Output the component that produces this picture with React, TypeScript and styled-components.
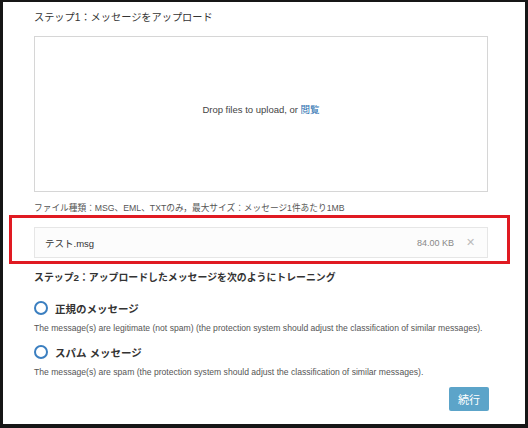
import styled, { createGlobalStyle } from 'styled-components'

const GlobalStyle = createGlobalStyle`
  html, body {
    margin: 0;
    padding: 0;
    background: #fff;
  }
  body {
    font-family: 'Liberation Sans', 'Noto Sans CJK JP', sans-serif;
    color: #333;
  }
`

const Frame = styled.div`
  box-sizing: border-box;
  width: 528px;
  height: 428px;
  border: 3px solid #161616;
  border-top-width: 2px;
  border-bottom-width: 4px;
  padding: 9px 37px 0 31px;
  display: flex;
  flex-direction: column;
`

const StepTitle = styled.h3<{ bold?: boolean }>`
  margin: 0;
  font-size: ${(props) => (props.bold ? 9.9 : 10.2)}px;
  line-height: 14px;
  font-weight: ${(props) => (props.bold ? 700 : 400)};
  color: #333;
`

const DropZone = styled.div`
  box-sizing: border-box;
  height: 156px;
  margin-top: 11px;
  border: 1px solid #d6d6d6;
  display: flex;
  align-items: center;
  justify-content: center;
  padding-bottom: 10px;
  font-size: 9.5px;
  color: #444;
  a {
    color: #2a6fb0;
    text-decoration: none;
  }
`

const Hint = styled.p`
  margin: 9px 0 0;
  font-size: 8.7px;
  line-height: 14px;
  color: #555;
`

const Highlight = styled.div`
  margin: 0 -22px 0 -25px;
  border: 3px solid #e01a22;
  padding: 9px 19px 3px 22px;
`

const FileRow = styled.div`
  box-sizing: border-box;
  height: 31px;
  border: 1px solid #e6e6e6;
  background: #fcfcfc;
  display: flex;
  align-items: center;
  padding: 0 12px 0 10px;
`

const FileName = styled.span`
  font-size: 9.5px;
  color: #333;
`

const FileSize = styled.span`
  margin-left: auto;
  font-size: 9px;
  color: #888;
`

const Remove = styled.span`
  margin-left: 12px;
  font-size: 11px;
  color: #bbb;
`

const Step2 = styled(StepTitle)`
  margin-top: 7px;
`

const Option = styled.div<{ first?: boolean }>`
  margin-top: ${(props) => (props.first ? 15 : 10)}px;
  display: flex;
  flex-direction: column;
`

const RadioRow = styled.label`
  display: flex;
  align-items: center;
  height: 16px;
`

const RadioCircle = styled.span`
  box-sizing: border-box;
  width: 14px;
  height: 14px;
  border: 2px solid #3b7fc0;
  border-radius: 50%;
  margin-right: 7px;
`

const RadioText = styled.span`
  font-size: 10.5px;
  font-weight: 600;
  color: #333;
`

const Description = styled.p`
  margin: 6px 0 0;
  font-size: 8.6px;
  line-height: 12px;
  color: #555;
`

const ContinueButton = styled.button`
  align-self: flex-end;
  margin: 9px -1px 0 0;
  width: 40px;
  height: 24px;
  border: none;
  border-radius: 2px;
  background: #5ca4c9;
  color: #fff;
  font-family: 'Liberation Sans', 'Noto Sans CJK JP', sans-serif;
  font-size: 11px;
  padding: 0;
`

export default function App() {
  return (
    <>
      <GlobalStyle />
      <Frame>
        <StepTitle>ステップ1：メッセージをアップロード</StepTitle>
        <DropZone>
          <span>
            Drop files to upload, or <a href="#">閲覧</a>
          </span>
        </DropZone>
        <Hint>ファイル種類：MSG、EML、TXTのみ，最大サイズ：メッセージ1件あたり1MB</Hint>
        <Highlight>
          <FileRow>
            <FileName>テスト.msg</FileName>
            <FileSize>84.00 KB</FileSize>
            <Remove>✕</Remove>
          </FileRow>
        </Highlight>
        <Step2 bold>ステップ2：アップロードしたメッセージを次のようにトレーニング</Step2>
        <Option first>
          <RadioRow>
            <RadioCircle />
            <RadioText>正規のメッセージ</RadioText>
          </RadioRow>
          <Description>
            The message(s) are legitimate (not spam) (the protection system should adjust the classification of similar messages).
          </Description>
        </Option>
        <Option>
          <RadioRow>
            <RadioCircle />
            <RadioText>スパム メッセージ</RadioText>
          </RadioRow>
          <Description>
            The message(s) are spam (the protection system should adjust the classification of similar messages).
          </Description>
        </Option>
        <ContinueButton>続行</ContinueButton>
      </Frame>
    </>
  )
}
